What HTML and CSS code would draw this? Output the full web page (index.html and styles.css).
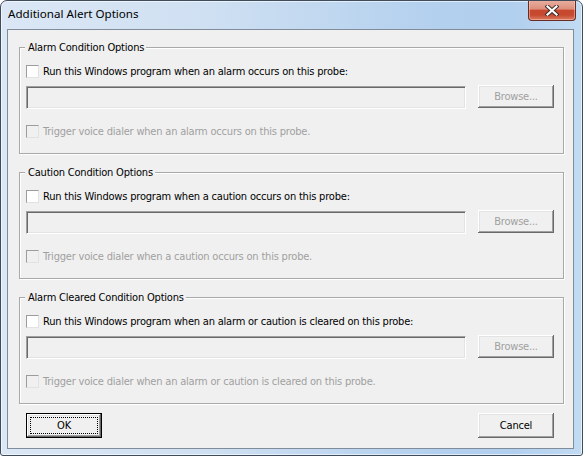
FILE: index.html
```html
<!DOCTYPE html>
<html>
<head>
<meta charset="utf-8">
<link rel="stylesheet" href="styles.css">
</head>
<body>
<div class="window">
  <div class="titlebar">
    <span class="title">Additional Alert Options</span>
    <span class="close">
      <svg width="14" height="11" viewBox="0 0 14 11">
        <path d="M2.5 1.5 L11.5 9.5 M11.5 1.5 L2.5 9.5" stroke="#3a2a28" stroke-width="4" stroke-linecap="square"/>
        <path d="M2.5 1.5 L11.5 9.5 M11.5 1.5 L2.5 9.5" stroke="#ffffff" stroke-width="2.2" stroke-linecap="square"/>
      </svg>
    </span>
  </div>
  <div class="client">
    <div class="group">
      <span class="legend">Alarm Condition Options</span>
      <div class="check-row"><span class="checkbox"></span><span>Run this Windows program when an alarm occurs on this probe:</span></div>
      <div class="path-row"><span class="textbox"></span><span class="button disabled">Browse...</span></div>
      <div class="check-row trigger disabled"><span class="checkbox"></span><span>Trigger voice dialer when an alarm occurs on this probe.</span></div>
    </div>
    <div class="group">
      <span class="legend">Caution Condition Options</span>
      <div class="check-row"><span class="checkbox"></span><span>Run this Windows program when a caution occurs on this probe:</span></div>
      <div class="path-row"><span class="textbox"></span><span class="button disabled">Browse...</span></div>
      <div class="check-row trigger disabled"><span class="checkbox"></span><span>Trigger voice dialer when a caution occurs on this probe.</span></div>
    </div>
    <div class="group">
      <span class="legend">Alarm Cleared Condition Options</span>
      <div class="check-row"><span class="checkbox"></span><span>Run this Windows program when an alarm or caution is cleared on this probe:</span></div>
      <div class="path-row"><span class="textbox"></span><span class="button disabled">Browse...</span></div>
      <div class="check-row trigger disabled"><span class="checkbox"></span><span>Trigger voice dialer when an alarm or caution is cleared on this probe.</span></div>
    </div>
    <div class="actions">
      <span class="button large default"><span class="focus">OK</span></span>
      <span class="button large">Cancel</span>
    </div>
  </div>
</div>
</body>
</html>
```

FILE: styles.css
```css
html, body {
  margin: 0;
  padding: 0;
  background: #ffffff;
}

.window {
  width: 583px;
  height: 456px;
  box-sizing: border-box;
  border: 1px solid #3e4c5c;
  border-radius: 7px 7px 3px 3px;
  background: linear-gradient(to right, #dbe7f5 0%, #cfe0f2 35%, #b3d0ee 75%, #b1cfee 88%, #c2dbf3 100%);
  box-shadow: inset 0 0 0 1px rgba(255, 255, 255, 0.6);
  display: flex;
  flex-direction: column;
  overflow: hidden;
  font-family: "DejaVu Sans Condensed", "DejaVu Sans", sans-serif;
  font-size: 11px;
  letter-spacing: -0.2px;
  color: #000000;
}

.titlebar {
  height: 28px;
  display: flex;
  align-items: flex-start;
  flex-shrink: 0;
}

.title {
  font-family: "Noto Sans", "Open Sans", sans-serif;
  font-size: 11.6px;
  letter-spacing: 0;
  line-height: 16px;
  padding: 5px 0 0 7px;
  color: #000000;
}

.close {
  margin: -1px 6px 0 auto;
  width: 48px;
  height: 21px;
  box-sizing: border-box;
  border: 1px solid #6a2b22;
  border-top: none;
  border-radius: 0 0 4px 4px;
  background: linear-gradient(#eab0a2 0%, #dc8f7c 45%, #c9472e 52%, #c54a31 75%, #dc7b60 100%);
  box-shadow: inset 0 0 0 1px rgba(255, 220, 210, 0.45);
  display: flex;
  align-items: center;
  justify-content: center;
}

.close svg {
  display: block;
  margin-top: 1px;
}

.client {
  margin: 0 8px 6px 6px;
  height: 420px;
  box-sizing: border-box;
  border: 1px solid #808c9a;
  background: #f0f0f0;
  padding: 17px 9px 0 11px;
  display: flex;
  flex-direction: column;
  gap: 18px;
}

.group {
  height: 107px;
  box-sizing: border-box;
  border: 1px solid #a9a9a9;
  box-shadow: 1px 1px 0 #ffffff, inset 1px 1px 0 #ffffff;
  padding: 0 9px 0 6px;
  display: flex;
  flex-direction: column;
  flex-shrink: 0;
}

.legend {
  align-self: flex-start;
  margin: -7px 0 0 -1px;
  padding: 0 2px 0 3px;
  height: 13px;
  line-height: 13px;
  background: #f0f0f0;
}

.check-row {
  display: flex;
  align-items: center;
  gap: 4px;
  height: 16px;
  margin-top: 9px;
}

.check-row.trigger {
  margin-top: 14px;
}

.checkbox {
  width: 13px;
  height: 13px;
  box-sizing: border-box;
  border: 1px solid;
  border-color: #9c9c9c #e2e2e2 #e2e2e2 #9c9c9c;
  background: #ffffff;
  flex-shrink: 0;
}

.disabled {
  color: #a0a0a0;
}

.check-row.disabled .checkbox {
  background: #f0f0f0;
}

.path-row {
  display: flex;
  align-items: flex-start;
  gap: 12px;
  margin-top: 6px;
  height: 24px;
}

.textbox {
  flex: 1;
  height: 23px;
  margin-top: 1px;
  box-sizing: border-box;
  border: 1px solid;
  border-color: #a0a0a0 #ffffff #ffffff #a0a0a0;
  box-shadow: inset 1px 1px 0 #696969, inset -1px -1px 0 #e3e3e3;
  background: #f0f0f0;
}

.button {
  width: 76px;
  height: 23px;
  box-sizing: border-box;
  background: #f0f0f0;
  box-shadow: inset -1px -1px 0 #696969, inset 1px 1px 0 #ffffff, inset -2px -2px 0 #a0a0a0, inset 2px 2px 0 #e3e3e3;
  display: flex;
  align-items: center;
  justify-content: center;
  padding-bottom: 1px;
  flex-shrink: 0;
}

.button.large {
  height: 25px;
}

.button.default {
  box-shadow: inset 0 0 0 1px #000000, inset -2px -2px 0 #696969, inset 2px 2px 0 #ffffff, inset -3px -3px 0 #a0a0a0, inset 3px 3px 0 #e3e3e3;
  padding: 4px;
  align-items: stretch;
}

.focus {
  flex: 1;
  border: 1px dotted #000000;
  display: flex;
  align-items: center;
  justify-content: center;
}

.actions {
  display: flex;
  justify-content: space-between;
  padding: 0 10px 0 7px;
  margin-top: -9px;
}
```
